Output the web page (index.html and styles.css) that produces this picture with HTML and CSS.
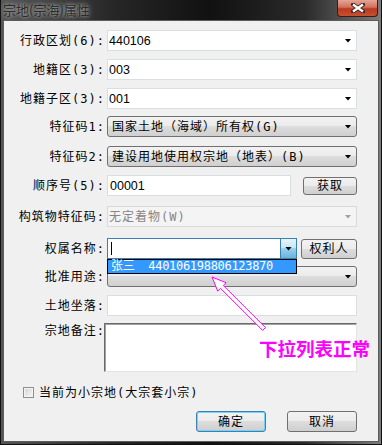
FILE: index.html
```html
<!DOCTYPE html>
<html lang="zh-CN">
<head>
  <meta charset="UTF-8">
  <title>宗地(宗海)属性</title>
  <link rel="stylesheet" href="styles.css">
</head>
<body>
  <div class="window">
    <div class="titlebar">
      <span class="title">宗地(宗海)属性</span>
      <span class="close">
        <svg width="14" height="10" viewBox="0 0 14 10">
          <path d="M2 1.5L12 8.5M12 1.5L2 8.5" stroke="#3a2a28" stroke-width="4" stroke-linecap="square"/>
          <path d="M2 1.5L12 8.5M12 1.5L2 8.5" stroke="#fff" stroke-width="2.2"/>
        </svg>
      </span>
    </div>

    <div class="client">
      <div class="row">
        <span class="label">行政区划(6):</span>
        <div class="field combo"><span class="value num">440106</span><span class="drop"></span></div>
      </div>
      <div class="row">
        <span class="label">地籍区(3):</span>
        <div class="field combo"><span class="value num">003</span><span class="drop"></span></div>
      </div>
      <div class="row">
        <span class="label">地籍子区(3):</span>
        <div class="field combo"><span class="value num">001</span><span class="drop"></span></div>
      </div>
      <div class="row gap-7">
        <span class="label">特征码1:</span>
        <div class="field combo list"><span class="value">国家土地（海域）所有权(G)</span><span class="drop"></span></div>
      </div>
      <div class="row gap-9">
        <span class="label">特征码2:</span>
        <div class="field combo list"><span class="value">建设用地使用权宗地（地表）(B)</span><span class="drop"></span></div>
      </div>
      <div class="row">
        <span class="label">顺序号(5):</span>
        <div class="input serial"><span class="num">00001</span></div>
        <span class="btn get">获取</span>
      </div>
      <div class="row gap-10">
        <span class="label">构筑物特征码:</span>
        <div class="field combo disabled"><span class="value">无定着物(W)</span><span class="drop"></span></div>
      </div>
      <div class="row gap-11">
        <span class="label">权属名称:</span>
        <div class="combo focus owner">
          <span class="value"><i class="caret"></i></span><span class="drop"></span>
          <div class="dropdown">
            <div class="item">张三 440106198806123870</div>
          </div>
        </div>
        <span class="btn holder">权利人</span>
      </div>
      <div class="row gap-7">
        <span class="label">批准用途:</span>
        <div class="field combo list"><span class="value"></span><span class="drop"></span></div>
      </div>
      <div class="row">
        <span class="label">土地坐落:</span>
        <div class="field input"></div>
      </div>
      <div class="row gap-7 memo-row">
        <span class="label">宗地备注:</span>
        <div class="memo"></div>
      </div>

      <div class="check-row">
        <span class="checkbox"></span>
        <span>当前为小宗地(大宗套小宗)</span>
      </div>

      <div class="actions">
        <span class="btn default">确定</span>
        <span class="btn">取消</span>
      </div>
    </div>

    <svg class="pointer" width="382" height="445" viewBox="0 0 382 445">
      <polygon points="212,277 226.1,282.7 223.3,285.5 265.4,327.6 262.6,330.4 220.5,288.3 217.7,291.1"
               fill="#fff" stroke="#ff00ff" stroke-width="1"/>
    </svg>
    <span class="note">下拉列表正常</span>
  </div>
</body>
</html>
```

FILE: styles.css
```css
* {
  margin: 0;
  padding: 0;
  box-sizing: border-box;
}

body {
  width: 382px;
  height: 445px;
  overflow: hidden;
  background: #2b2b2b;
  font: 12px/14px "DejaVu Sans Mono", "Noto Sans CJK SC", monospace;
  letter-spacing: 1px;
  color: #000;
}

.window {
  position: relative;
  width: 382px;
  height: 445px;
  display: flex;
  flex-direction: column;
  border: 1px solid #101010;
  border-top: 0;
  background: linear-gradient(to right, #565656, #262626 30%, #111 55%, #2a2a2a 80%, #7c7c7c);
}

/* title bar */
.titlebar {
  height: 20px;
  display: flex;
  justify-content: space-between;
  align-items: flex-start;
}
.title {
  padding-left: 2px;
  font: 13px/20px "Noto Sans CJK SC", sans-serif;
  letter-spacing: 0;
  color: #2b2b2b;
  text-shadow: 0 0 6px #a8a8a8, 0 0 3px #a8a8a8;
}
.close {
  width: 41px;
  height: 17px;
  margin-right: 3px;
  display: flex;
  align-items: center;
  justify-content: center;
  border: 1px solid #3b1d16;
  border-top: 0;
  border-radius: 0 0 4px 4px;
  background: linear-gradient(#e6a697, #d0715c 45%, #b73a22 55%, #c9502f);
}

/* client area */
.client {
  flex: 1;
  margin: 0 2px 2px;
  padding: 9px 21px 0 0;
  border: 1px solid #5c5c5c;
  background: #f0f0f0;
}

.row {
  display: flex;
  align-items: center;
  height: 21px;
  margin-top: 8px;
}
.row:first-child { margin-top: 0; }
.row.gap-7 { margin-top: 7px; }
.row.gap-9 { margin-top: 9px; }
.row.gap-10 { margin-top: 10px; }
.row.gap-11 { margin-top: 11px; }

.label {
  width: 101px;
  flex: none;
  text-align: right;
  white-space: nowrap;
}

.field {
  width: 250px;
  margin-left: 2px;
}

.num {
  font-family: "Liberation Sans", sans-serif;
  font-size: 12.5px;
  letter-spacing: 0;
}

/* combo boxes */
.combo {
  position: relative;
  display: flex;
  height: 21px;
  background: #fff;
  border: 1px solid #dadde2;
}
.combo .value {
  flex: 1;
  display: flex;
  align-items: center;
  padding-left: 1px;
  white-space: nowrap;
}
.combo .drop {
  width: 16px;
  display: flex;
  align-items: center;
  justify-content: center;
}
.combo .drop::after {
  content: "";
  width: 7px;
  height: 4px;
  background: #000;
  clip-path: polygon(0 0, 100% 0, 50% 100%);
}

.combo.list {
  border-color: #707070;
  border-radius: 3px;
  background: linear-gradient(#f2f2f2, #ebebeb 50%, #dddddd 50%, #cfcfcf);
}
.combo.list .value { padding-left: 4px; }

.combo.disabled {
  background: #f4f4f4;
  border-color: #d9d9d9;
  color: #858585;
}
.combo.disabled .drop::after { background: #a2a2a2; }

.combo.focus { border-color: #3c7fb1; }
.combo.focus .drop {
  border-left: 1px solid #3c7fb1;
  background: linear-gradient(#e5f4fc, #c4e5f6 50%, #98d1ef 50%, #68b3db);
}
.owner {
  width: 190px;
  margin-left: 2px;
}
.caret {
  width: 1px;
  height: 13px;
  margin-left: 2px;
  background: #000;
}

.dropdown {
  position: absolute;
  left: -1px;
  top: calc(100% + 1px);
  width: 190px;
  height: 15px;
  border: 1px solid #000;
  background: #fff;
  z-index: 2;
}
.dropdown .item {
  height: 13px;
  padding-left: 3px;
  background: #3399ff;
  color: #fff;
  font-size: 12px;
  line-height: 13px;
  letter-spacing: -0.3px;
  word-spacing: 7px;
  white-space: nowrap;
}

/* text fields and buttons */
.input {
  height: 21px;
  display: flex;
  align-items: center;
  padding-left: 2px;
  background: #fff;
  border: 1px solid #dadde2;
}
.serial {
  width: 184px;
  margin-left: 2px;
}

.btn {
  height: 21px;
  width: 70px;
  display: flex;
  align-items: center;
  justify-content: center;
  border: 1px solid #707070;
  border-radius: 3px;
  background: linear-gradient(#f2f2f2, #ebebeb 50%, #dddddd 50%, #cfcfcf);
}
.btn.get {
  width: 54px;
  height: 18px;
  margin-left: 12px;
}
.btn.holder {
  width: 56px;
  height: 20px;
  margin-left: 4px;
}
.btn.default {
  border-color: #3c7fb1;
  box-shadow: inset 0 0 0 1px #74d3f6;
}

.memo-row {
  align-items: flex-start;
  height: 49px;
}
.memo-row .label { padding-top: 1px; }
.memo {
  width: 253px;
  height: 49px;
  margin-left: -1px;
  background: #fff;
  border: 1px solid;
  border-color: #6a6a6a #e3e3e3 #e3e3e3 #6a6a6a;
  box-shadow: inset 1px 1px 0 #a0a0a0;
}

.check-row {
  display: flex;
  align-items: center;
  gap: 5px;
  height: 11px;
  margin-top: 15px;
  padding-left: 19px;
}
.checkbox {
  width: 11px;
  height: 11px;
  flex: none;
  border: 1px solid #8e8f8f;
  background: linear-gradient(135deg, #d4d4d4, #f7f7f7);
  box-shadow: inset 0 0 0 1px #f4f4f4;
}

.actions {
  display: flex;
  justify-content: flex-end;
  gap: 21px;
  margin-top: 13px;
}

/* annotation drawn over the dialog */
.pointer {
  position: absolute;
  left: -1px;
  top: 0;
  pointer-events: none;
  z-index: 3;
}
.note {
  position: absolute;
  left: 258px;
  top: 338px;
  font: bold 18.5px/20px "Noto Sans CJK SC", sans-serif;
  letter-spacing: 0;
  color: #ff00ff;
  z-index: 3;
}
```
